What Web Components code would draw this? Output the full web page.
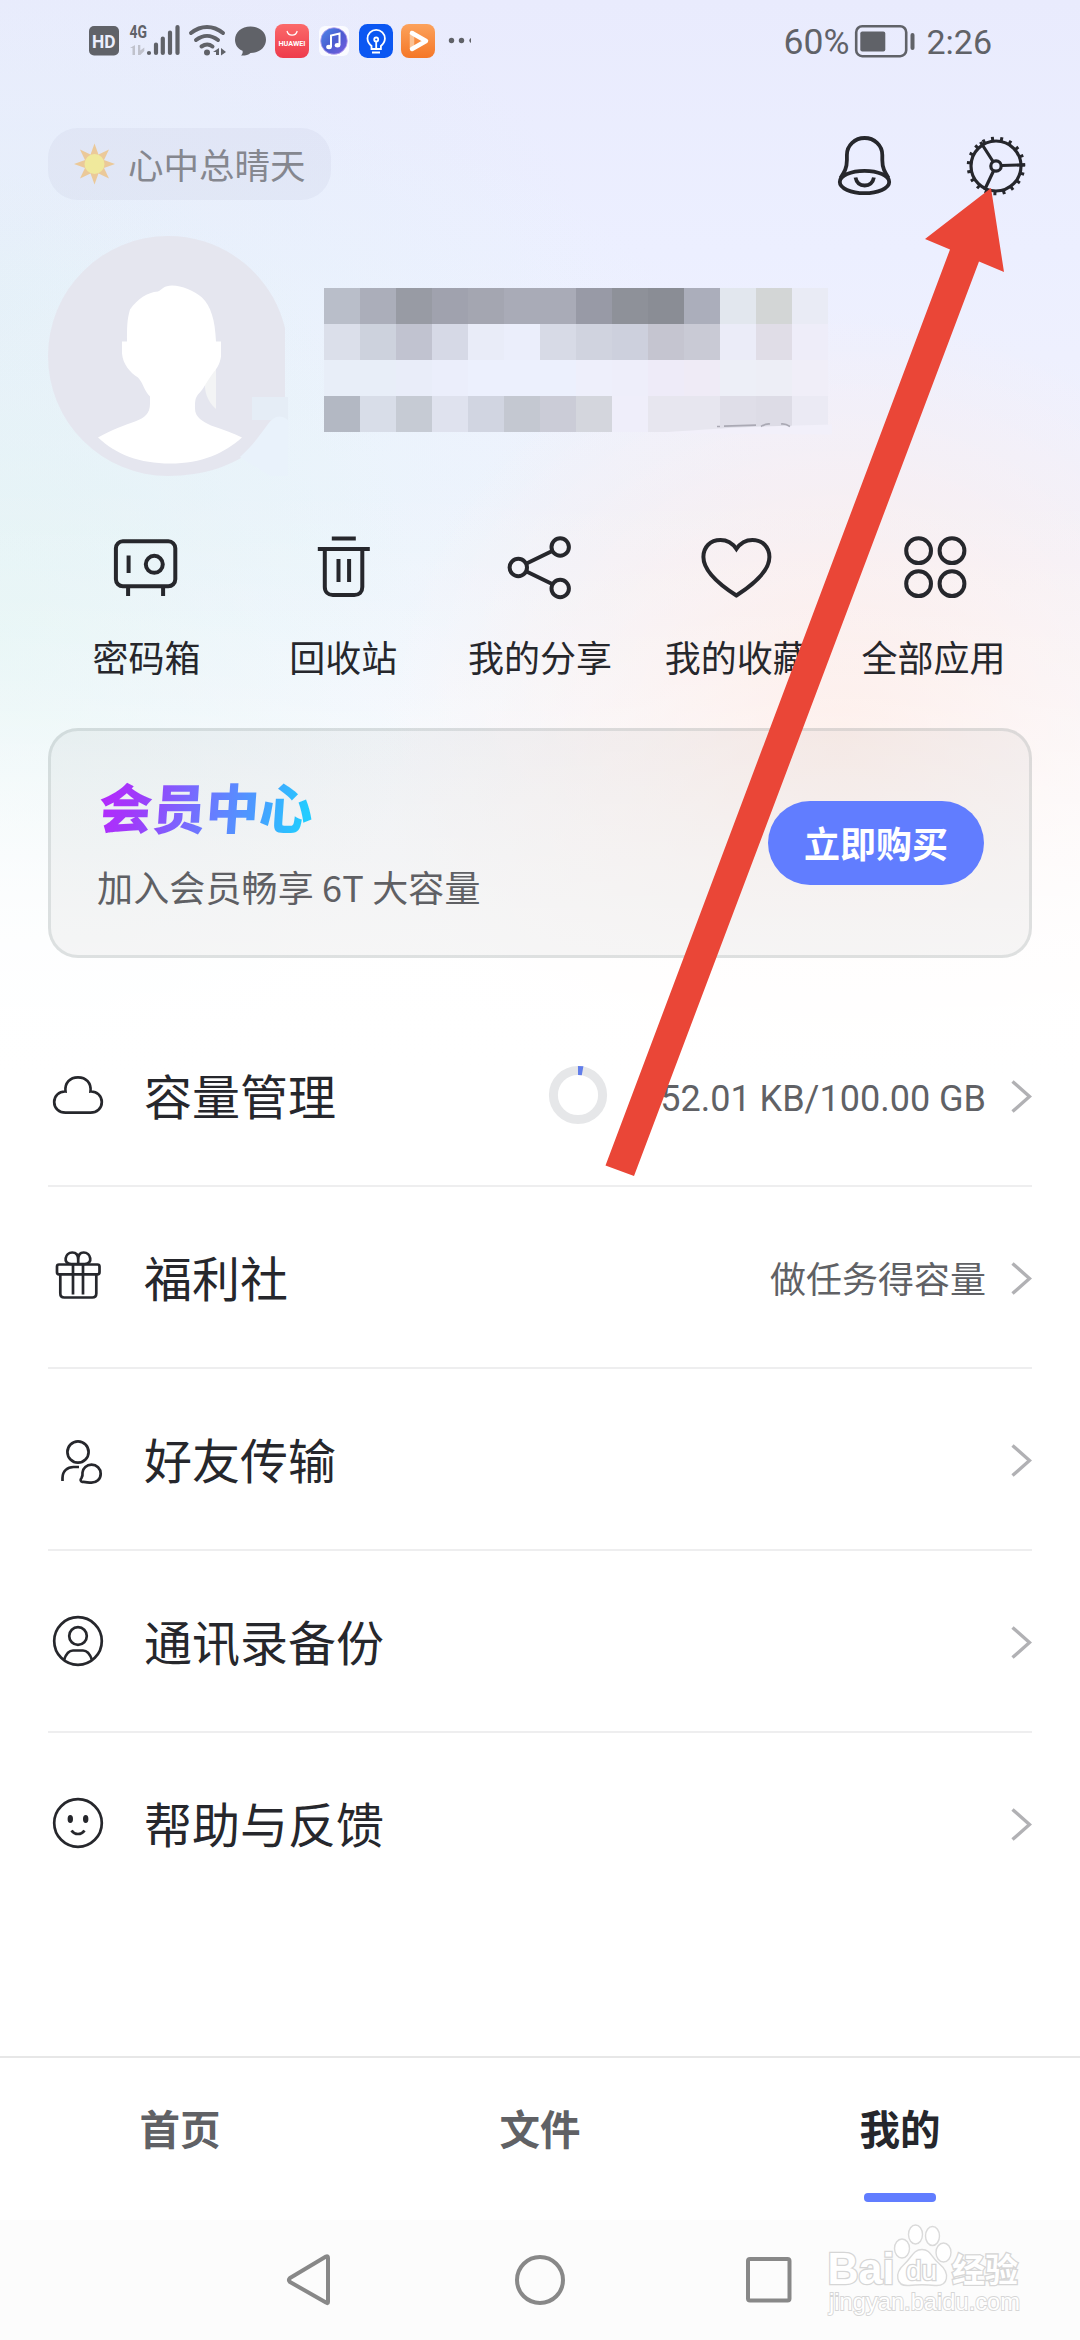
<!DOCTYPE html>
<html lang="zh-CN">
<head>
<meta charset="utf-8">
<meta name="viewport" content="width=device-width, initial-scale=1">
<title>我的</title>
<style>
html,body{margin:0;padding:0}
body{width:1080px;height:2340px;overflow:hidden;background:#fff;font-family:"Noto Sans CJK SC",sans-serif}
</style>
</head>
<body>
<profile-app></profile-app>
<script>
const define = (name, html, setup) => {
  const template = document.createElement('template');
  template.innerHTML = html;
  customElements.define(name, class extends HTMLElement {
    constructor() {
      super();
      this.attachShadow({ mode: 'open' }).append(template.content.cloneNode(true));
    }
    connectedCallback() { if (setup) setup(this, this.shadowRoot); }
  });
};

/* Each icon: [viewBox, markup] */
const ICONS = {
  bell: ['835 135 60 62', '<ellipse cx="864.5" cy="182" rx="24.7" ry="11.2"/><path d="M840.5 178c4-6 6.400-10 6.400-18v-5c0-9.500 8-17 17.700-17s17.700 7.500 17.700 17v5c0 8 2.400 12 6.200 18"/><path d="M855.500 177.500c1 5 4.500 8 9.200 8s8.200-3 9.200-8"/>'],
  safe: ['106.400 527 80 80', '<rect x="116.300" y="541.300" width="59.400" height="45" rx="7"/><path d="M128.500 586v10M163.500 586v10M129 555.500v17.500"/><circle cx="154.700" cy="564.300" r="8.500"/>'],
  trash: ['303.200 527 80 80', '<path d="M332 538.500h24M318 549h52M325 549v38c0 5 3.500 8 8 8h21.500c5 0 8-3 8-8v-38M338.700 559v23M349.300 559v23"/>'],
  share: ['500 527 80 80', '<circle cx="518.300" cy="567.500" r="8.700"/><circle cx="560.200" cy="547" r="8.700"/><circle cx="560.200" cy="588.500" r="8.700"/><path d="M526.500 563.500l25.700-12.500M526.500 571.500l25.700 12.500"/>'],
  heart: ['696.800 527 80 80', '<path d="M736.200 549c-4-6-9-9-16-9-10 0-17 7-17 17 0 14 15 27 33 38.500 18-11.500 33-24.500 33-38.500 0-10-7-17-17-17-7 0-12 3-16 9z"/>'],
  apps: ['893.600 527 80 80', '<circle cx="918.200" cy="550.700" r="12.400"/><circle cx="951.600" cy="550.700" r="12.400"/><circle cx="918.200" cy="583.700" r="12.400"/><circle cx="951.600" cy="583.700" r="12.400"/>'],
  cloud: ['48 1066 60 60', '<path d="M65.500 1092.500C64.500 1084 70 1078.300 78 1078.300s13.500 5.700 12.500 14.200c6.500-.3 11.300 4.500 11.300 10.500 0 6.500-5 10.600-11.300 10.600h-25c-6.300 0-11.300-4.100-11.300-10.600 0-6 4.800-10.800 11.300-10.500z"/>'],
  gift: ['48 1248 60 60', '<rect x="57" y="1265.500" width="42.500" height="9.800" rx="2"/><path d="M60.300 1275.500v19c0 2.500 1.500 4 4 4h28c2.500 0 4-1.500 4-4v-19M73 1265.500v30M83 1265.500v30"/><path d="M78.200 1265h-7c-9 0-6-11.500 1-11.500 4 0 6 2.500 6 7zM78.200 1265h6.500c9 0 6-11.500-1-11.500-4 0-5.500 2.500-5.500 7z"/>'],
  friend: ['48 1430 60 60', '<circle cx="78" cy="1453" r="10.600"/><path d="M62.500 1482v-3c0-7 5-11 11-11h5.500"/><path d="M82.500 1483c-2.300-.7-2.300-2.300-1-4 1.300-2 1.200-3.500 1-5.500.3-4.500 4.200-7.800 9-7.800 5.200 0 9.200 4 9.200 9 0 5.500-4.200 9-9.200 9-3.500 0-6-1-9-.7z"/>'],
  contact: ['48 1612 60 60', '<circle cx="78" cy="1642" r="23.800"/><circle cx="78" cy="1637" r="8.800"/><path d="M64 1661c2-6 5-9.500 9-9.500h10c4 0 7 3.500 9 9.500"/>'],
  smile: ['48 1794 60 60', '<circle cx="78" cy="1824" r="23.800"/><path d="M71.500 1831.500c3 4.700 10 4.700 13 0"/><ellipse cx="70.300" cy="1820" rx="1.900" ry="3.300" fill="#26272c" stroke-width="1.600"/><ellipse cx="85.700" cy="1820" rx="1.900" ry="3.300" fill="#26272c" stroke-width="1.600"/>']
};

define('line-icon', `<style>:host{display:block;flex:none}svg{display:block;fill:none;stroke:#26272c;stroke-width:var(--stroke,4)}</style><svg></svg>`, (host, root) => {
  const icon = ICONS[host.getAttribute('name')];
  if (!icon) return;
  const [box, markup] = icon;
  const svg = root.querySelector('svg');
  const [, , w, h] = box.split(' ');
  svg.setAttribute('viewBox', box);
  svg.setAttribute('width', w);
  svg.setAttribute('height', h);
  svg.innerHTML = markup;
});

/* Puts the icon named by the host's "icon" attribute in front of its content */
const addIcon = (host, root) => {
  if (root.querySelector('line-icon')) return;
  const icon = document.createElement('line-icon');
  icon.setAttribute('name', host.getAttribute('icon'));
  root.querySelector('.label').before(icon);
};

define('gear-icon', `<style>:host{display:block}svg{display:block;fill:none;stroke:#26272c;stroke-width:3.200}</style>
<svg width="64" height="64" viewBox="-32 -32 64 64"><circle r="25"/><circle r="5.200"/><path d="M5.500-.500L29-1.200M-3-4.500L-15.500-24M-2.500 5L-11.500 24"/><g id="teeth" stroke-width="3"></g></svg>`, (host, root) => {
  root.getElementById('teeth').innerHTML = Array.from({ length: 19 }, (_, i) =>
    `<path d="M25 0H29.300" transform="rotate(${i * 360 / 19 - 2.500})"/>`).join('');
});

define('status-bar', `<style>
:host{display:flex;height:80px;box-sizing:border-box;padding:24px 88px 0 89px;justify-content:space-between;align-items:flex-start;color:#606268}
.left{display:flex;gap:9px}.right{display:flex;align-items:center;font:34px/34px Roboto,sans-serif;padding-top:1px}.percent{font-size:35.500px}
svg{display:block;overflow:visible}text{font-family:Roboto,"Liberation Sans",sans-serif}.battery{margin:-2px 11px 0 6px}
</style>
<div class="left">
<svg width="31" height="34" viewBox="89 24 31 34"><rect x="89" y="26" width="30" height="29.500" rx="5" fill="#606268"/><text x="92" y="48" font-size="19" font-weight="700" fill="#eceefd" textLength="23.500" lengthAdjust="spacingAndGlyphs">HD</text></svg>
<svg width="51" height="34" viewBox="129 24 51 34"><text x="129.500" y="38" font-size="17.500" font-weight="700" fill="#606268" textLength="17.500" lengthAdjust="spacingAndGlyphs">4G</text><g fill="none" stroke="#606268" stroke-linecap="round" stroke-width="4.200"><path d="M149 53v0M156 44.500v8.500M162.800 38.500v14.500M170 32.500v20.500M177.500 27v26"/></g><path d="M130 48l5-3v10h-2.500v-7zM138 45h2.300v5.500l4-3v3.500l-4 4h-2.300z" fill="#c0c2cc"/></svg>
<svg width="37" height="34" viewBox="189 24 37 34"><g fill="none" stroke="#606268" stroke-width="4" stroke-linecap="round"><path d="M191 33c10-8 22-8 32 0M196 40c7-5.500 15-5.500 22 0M201.500 46.500c4-2.700 7.500-2.700 11 0"/></g><circle cx="207" cy="52.500" r="3" fill="#606268"/><path d="M213 52l6-4v7h-3v-3zM221 48l5 4-5 3.500z" fill="#606268"/></svg>
<svg width="31" height="34" viewBox="235 24 31 34"><path d="M250.500 26.500c9 0 15.500 5.800 15.500 13.200s-6.500 13.300-15.500 13.300c-2.200 2-5.500 2.700-9.500 2.500 1.500-1.500 2-3 1.500-4.800-4.700-2-7.500-6-7.500-11 0-7.400 6.500-13.200 15.500-13.200z" fill="#606268"/></svg>
<svg width="35" height="34" viewBox="275 24 35 34"><defs><linearGradient id="r" x2="0" y2="1"><stop stop-color="#fb6a6a"/><stop offset="1" stop-color="#ee3b4c"/></linearGradient></defs><rect x="275" y="24" width="34" height="34" rx="8" fill="url(#r)"/><path d="M287 31c1.200 5.500 9 5.500 10.200 0" fill="none" stroke="#fff" stroke-width="1.200"/><text x="278.500" y="45.600" font-size="6.600" font-weight="700" fill="#fff" textLength="27" lengthAdjust="spacingAndGlyphs">HUAWEI</text></svg>
<svg width="31" height="34" viewBox="319 24 31 34"><defs><linearGradient id="m" x2="1" y2="1"><stop stop-color="#4f8bea"/><stop offset=".5" stop-color="#4a5bd0"/><stop offset="1" stop-color="#7a5fe0"/></linearGradient></defs><rect x="319" y="26" width="30" height="30" rx="6" fill="#fafbff"/><circle cx="334" cy="41" r="13.300" fill="url(#m)" stroke="#b9a0ef" stroke-width=".8"/><path d="M331 47V35.500l8.500-2v11.500" fill="none" stroke="#fff" stroke-width="2"/><ellipse cx="329" cy="47" rx="2.800" ry="2.200" fill="#fff"/><ellipse cx="337.500" cy="45.200" rx="2.800" ry="2.200" fill="#fff"/></svg>
<svg width="34" height="34" viewBox="359 24 34 34"><rect x="359" y="24" width="34" height="34" rx="8.500" fill="#0b57f2"/><g fill="none" stroke="#fff" stroke-width="1.800"><path d="M371.500 49v-3c-2-1.800-4-4-4-7.500a8.700 8.700 0 0 1 17.400 0c0 3.500-2 5.700-4 7.500v3zM372 52.500h8M376.200 49v-8"/><circle cx="376.200" cy="39.500" r="2"/></g></svg>
<svg width="33" height="34" viewBox="402 24 33 34"><defs><linearGradient id="o" x2="0" y2="1"><stop stop-color="#fca25c"/><stop offset="1" stop-color="#f57727"/></linearGradient></defs><rect x="401" y="24" width="34" height="34" rx="8" fill="url(#o)"/><g fill="none" stroke-width="4.500" stroke-linecap="round"><path d="M412 33v15" stroke="#fbc193"/><path d="M412 33l14 8-14 8" stroke="#fff" stroke-linejoin="round"/></g></svg>
<svg width="28" height="34" viewBox="444 24 28 34" fill="#606268"><circle cx="451.500" cy="40.500" r="2.700"/><circle cx="461.500" cy="40.500" r="2.700"/><path d="M471 38a2.700 2.700 0 0 0 0 5z"/></svg>
</div>
<div class="right"><span class="percent">60%</span><svg class="battery" width="60" height="34" viewBox="854 23 60 34"><rect x="855.200" y="25.200" width="50" height="30" rx="6" fill="none" stroke="#606268" stroke-width="2.600"/><rect x="859.300" y="30.500" width="25" height="20" rx="2" fill="#606268"/><rect x="909.500" y="32" width="4" height="17" rx="2" fill="#606268"/></svg><span>2:26</span></div>`);

define('mood-pill', `<style>:host{display:flex;align-items:center;box-sizing:border-box;width:283px;height:72px;border-radius:30px;background:rgba(70,70,110,.045);padding-left:26px;gap:13px;font-size:35.500px;line-height:52px;color:#85878f}svg{display:block}</style>
<svg width="41" height="42" viewBox="-20.500 -21 41 42"><g id="rays" fill="#ebc999"></g><circle r="10" fill="#f0e99c"/></svg><span><slot></slot></span>`, (host, root) => {
  root.getElementById('rays').innerHTML = Array.from({ length: 8 }, (_, i) =>
    `<path d="M-4.500-8L0-20.500 4.500-8z" transform="rotate(${i * 45})"/>`).join('');
});

define('top-bar', `<style>:host{display:flex;align-items:center;margin:48px 52px 0 48px;height:72px}.actions{margin-left:auto;display:flex;align-items:center;gap:69px;padding-top:3px}line-icon{--stroke:3.800}</style>
<mood-pill>心中总晴天</mood-pill><div class="actions"><line-icon name="bell"></line-icon><gear-icon></gear-icon></div>`);

define('pixel-name', `<style>:host{display:grid;position:relative;grid-template-columns:repeat(14,36px);grid-auto-rows:36px}svg{position:absolute;left:324px;top:126px}</style>
<svg width="190" height="24" viewBox="648 414 190 24" fill="none" stroke="#aaa9b4" stroke-width="1.700"><path d="M650 433c40-2 70-5 110-6.500l72-2v10z" fill="#f2f0fa" stroke="none"/><path d="M717 426.500h3M724 426.200l32-1M761 426.500c4-2.500 6-3 9-2.500M781 424c3-.5 6 .5 9 2.500"/></svg>`, (host, root) => {
  const rows = [
    'b9bec9 abaeba 989ba4 a0a2ae a4a6b1 a9abb7 a9abb7 989aa6 8e9199 8a8d95 abaebb e2e7ee d3d6d6 e9ebf5',
    'dbdfea cdd2dd c1c3d0 d6d9e6 e9ecf8 ebeefb d7dae6 d0d3df cdd0dd c5c5d0 c9cad5 ebecf8 e0dde7 eeedf9',
    'e8eef8 e8eef8 e9edf9 ebeefb ecf0fd ecf0fd ecf0fd eeeffb eeeefa eeebf8 efebf6 edeff7 edeef6 f0eef8',
    'b3b8c3 d8dde8 c6cbd4 dfe2ee d1d5e1 c4c8d1 cbccd7 d4d6dd efeefa e7e6ef e7e6ef dfdee8 dddce6 ebeaf4'];
  rows.join(' ').split(' ').forEach(c => {
    const cell = document.createElement('i');
    cell.style.background = '#' + c;
    root.append(cell);
  });
});

define('user-header', `<style>:host{display:flex;align-items:flex-start;margin:36px 48px 0;height:240px}svg{display:block;flex:none}.info{margin:52px 0 0 36px}</style>
<svg width="240" height="240" viewBox="48 236 240 240"><path d="M168 236c57 0 104 39 117 92v72c-11 47-57 76-117 76a120 120 0 0 1 0-240z" fill="#e5e6ef"/><path d="M252 397h36v23h-36z" fill="#e5edf6"/><path d="M288 420c-8-6-14-4-20 4-10 14-18 24-28 33l30 19h18z" fill="#e9f2fb"/><path d="M205 380l11-20v49c-9-8-12-18-11-29z" fill="#f3f4f5"/>
<path d="M172 285.500c10 0 22 5 30 12 9 9 13 22 14 44h5v15c-1 8-5 13-9 18-6 8-8 14-14 20-3 4-3 7-3 14 0 9 8 13 16 17 12 4 23 8 31 12-18 16-40 26-72 26-30 0-54-9-72-26 14-8 26-12 37-16 10-4 15-8 15-18v-7c-6-6-6-12-12-19-8-5-15-13-16-24v-12h5c0-14 0-22 3-32 8-11 17-17 28-18 4-2 6-6 14-6z" fill="#fff"/></svg>
<div class="info"><pixel-name></pixel-name></div>`);

define('quick-action', `<style>:host{display:flex;flex:1;flex-direction:column;align-items:center;gap:23px;padding-bottom:1px;font-size:36px;line-height:52px;color:#26272c}.label{white-space:nowrap}</style><span class="label"><slot></slot></span>`, addIcon);

define('member-card', `<style>
:host{display:flex;align-items:center;justify-content:space-between;box-sizing:border-box;height:230px;margin:45px 48px 0;padding:0 45px 0 46px;border:3px solid rgba(90,105,110,.15);border-radius:30px;background:rgba(40,40,40,.042)}
.copy{display:flex;flex-direction:column;padding-bottom:3px}
.title{font-size:53.500px;line-height:70px;font-weight:900;align-self:flex-start;transform:skewX(-4deg);margin-left:2px;background:linear-gradient(100deg,#b12cfc 5%,#a03afa 18%,#6f74ff 48%,#4b9bff 72%,#22ccff 95%);-webkit-background-clip:text;background-clip:text;color:transparent}
.sub{font-size:36px;line-height:52px;margin-top:19px;color:#5f6064;letter-spacing:.15px}
.buy{width:216px;height:84px;border-radius:42px;background:#617dff;color:#fff;font-size:36px;line-height:83px;text-align:center;font-weight:700}
</style><div class="copy"><div class="title"><slot name="title"></slot></div><div class="sub"><slot></slot></div></div><div class="buy"><slot name="action"></slot></div>`);

define('usage-ring', `<style>:host{display:block}svg{display:block}</style><svg width="60" height="60" viewBox="-30 -30 60 60" fill="none" stroke-width="9"><circle r="24.600" stroke="#e6e7e9"/><path d="M0-24.600a24.600 24.600 0 0 1 4.600 .4" stroke="#617dea"/></svg>`);

define('menu-row', `<style>
:host{display:flex;align-items:center;box-sizing:border-box;height:182px;border-bottom:2px solid #eeeeef;font-size:48px;line-height:70px;color:#26272c}
:host([last]){border-bottom-color:transparent}
line-icon{--stroke:2.700;margin-right:36px}.label{padding-bottom:3px}.value{margin-left:auto;display:flex;align-items:center;color:#606165;font-size:36px;line-height:52px}
.chev{display:block;margin:2px 0 0 23px}
</style><span class="label"><slot></slot></span><div class="value"><slot name="value"></slot></div>
<svg class="chev" width="23" height="36" viewBox="0 0 23 36" fill="none" stroke="#b1b1b4" stroke-width="3.400"><path d="M3.500 3.500L20.500 18.500 3.500 33.500"/></svg>`, addIcon);

define('tab-item', `<style>:host{flex:1;display:flex;flex-direction:column;align-items:center;padding-top:40px;font-size:40.500px;line-height:60px;font-weight:700;color:#606165}:host([active]){color:#26272c}i{display:none;width:72px;height:9px;border-radius:4px;background:#617dff;margin-top:35px}:host([active]) i{display:block}</style><span><slot></slot></span><i></i>`);

define('system-nav', `<style>:host{display:block;height:120px;background:#fcfcfc}svg{display:block}</style><svg width="1080" height="120" viewBox="0 2220 1080 120" fill="none" stroke="#888" stroke-width="4" stroke-linejoin="round"><path d="M328 2258v44q0 2-2 .5L290 2282q-2-2 0-4l36-21.500q2-1 2 1.500z"/><circle cx="540" cy="2280" r="23"/><rect x="748" y="2259" width="41.500" height="41.500" rx="2"/></svg>`);

define('guide-arrow', `<style>:host{position:absolute;left:0;top:0;pointer-events:none}svg{display:block}</style><svg width="1080" height="1200"><path d="M605.500 1165.500L950 249.500 925 239 991 188 1004 272 979 261.500 634 1176z" fill="#ea4637"/></svg>`);

define('site-mark', `<style>:host{position:absolute;left:820px;top:2215px}svg{display:block;overflow:visible}text{paint-order:stroke;fill:#fff;stroke:#d6d6d6;stroke-width:2.600;font-family:"Liberation Sans","Noto Sans CJK SC",sans-serif}</style><svg width="240" height="115" viewBox="820 2215 240 115"><g fill="#fff" stroke="#dadada" stroke-width="1.400"><ellipse cx="902" cy="2248.500" rx="7.500" ry="9.500"/><ellipse cx="915.500" cy="2234.500" rx="7" ry="9.500"/><ellipse cx="932.500" cy="2236" rx="7" ry="9.500"/><ellipse cx="943.500" cy="2252.500" rx="7.500" ry="9.500"/><path d="M922 2249.500c9 0 9 8 17 14 12 10 9 23-4 22-9-1-17-1-26 0-13 1-15-12-5-21 8-7 9-15 18-15z"/></g><text x="827.500" y="2284" font-size="44" font-weight="700" textLength="67" lengthAdjust="spacingAndGlyphs">Bai</text><text x="906" y="2280" font-size="27" textLength="31" lengthAdjust="spacingAndGlyphs">du</text><text x="952" y="2281.500" font-size="33" font-weight="700">经验</text><text x="829" y="2309.500" font-size="24.500" style="stroke-width:1.800" textLength="191" lengthAdjust="spacingAndGlyphs">jingyan.baidu.com</text></svg>`);

define('profile-app', `<style>
:host{display:flex;flex-direction:column;position:relative;width:1080px;height:2340px;
background:linear-gradient(to bottom,rgba(255,255,255,0) 480px,rgba(255,255,255,.25) 700px,rgba(255,255,255,.85) 950px,#fff 1080px),
radial-gradient(ellipse 460px 430px at 840px 740px,rgba(255,232,224,.8),rgba(255,236,230,.5) 45%,rgba(255,240,236,0)),
radial-gradient(ellipse 420px 480px at 0 640px,rgba(226,245,243,.8),rgba(228,244,245,.45) 50%,rgba(230,244,248,0)),
radial-gradient(ellipse 460px 420px at 320px 540px,rgba(234,245,252,.8),rgba(234,245,252,0)),
radial-gradient(ellipse 600px 400px at 0 300px,rgba(228,239,248,.75),rgba(228,239,248,0)),
linear-gradient(to bottom,#e9ebfd,#ecefff 250px,#f2f2fc 560px,#fafafe 800px,#fff 1080px)}
.quick{display:flex;margin:51px 48px 0}
.list{margin:47px 48px 0}
.tabs{display:flex;margin-top:auto;border-top:2px solid #e7e7e7;height:162px;background:#fff}
.num{font-family:Roboto,sans-serif;font-size:36px;width:342px;text-align:right;white-space:nowrap;margin:7px 0 0 36px}
</style>
<status-bar></status-bar><top-bar></top-bar><user-header></user-header>
<div class="quick"><quick-action icon="safe">密码箱</quick-action><quick-action icon="trash">回收站</quick-action><quick-action icon="share">我的分享</quick-action><quick-action icon="heart">我的收藏</quick-action><quick-action icon="apps">全部应用</quick-action></div>
<member-card><span slot="title">会员中心</span>加入会员畅享 6T 大容量<span slot="action">立即购买</span></member-card>
<div class="list">
<menu-row icon="cloud">容量管理<usage-ring slot="value"></usage-ring><span slot="value" class="num">52.01 KB/100.00 GB</span></menu-row>
<menu-row icon="gift">福利社<span slot="value">做任务得容量</span></menu-row>
<menu-row icon="friend">好友传输</menu-row>
<menu-row icon="contact">通讯录备份</menu-row>
<menu-row icon="smile" last>帮助与反馈</menu-row>
</div>
<div class="tabs"><tab-item>首页</tab-item><tab-item>文件</tab-item><tab-item active>我的</tab-item></div>
<system-nav></system-nav><guide-arrow></guide-arrow><site-mark></site-mark>`);
</script>
</body>
</html>
